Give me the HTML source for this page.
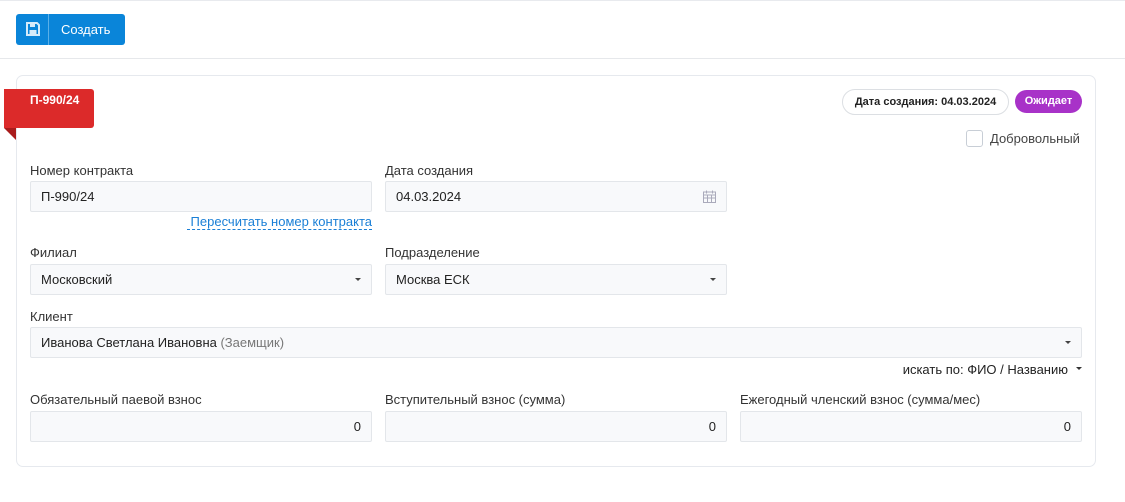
<!DOCTYPE html>
<html><head><meta charset="utf-8"><style>
*{box-sizing:border-box;margin:0;padding:0}
body{width:1125px;height:502px;background:#fff;font-family:"Liberation Sans",sans-serif;font-size:13px;color:#222;position:relative;overflow:hidden}
.a{position:absolute}
.top{left:0;top:0;width:1125px;height:1px;background:#e8eaee}
.sep{left:0;top:58px;width:1125px;height:1px;background:#e6e8eb}
.btn{left:16px;top:14px;width:109px;height:31px;background:#0a85d9;border-radius:3px;color:#fff}
.card{left:16px;top:75px;width:1080px;height:392px;border:1px solid #e6e9ee;border-radius:7px}
.lbl{color:#333;font-size:13px}
.inp{height:31px;background:#f8f9fb;border:1px solid #e3e6ea;border-radius:2px;padding-left:10px;line-height:29px;color:#222}
.r{text-align:right;padding-right:10px}
.car{position:absolute;right:10px;top:13px;width:0;height:0;border-left:3.5px solid transparent;border-right:3.5px solid transparent;border-top:3.5px solid #444}
</style></head><body>
<div class="a top"></div>
<div class="a btn">
 <svg class="a" style="left:10px;top:8px" width="14" height="14" viewBox="0 0 14 14"><path d="M1 1h10l2 2v10H1z" fill="none" stroke="#d6ebfa" stroke-width="2"/><rect x="4" y="1.5" width="5" height="3.5" fill="#d6ebfa"/><rect x="3.5" y="8" width="7" height="4" fill="#d6ebfa"/></svg>
 <div class="a" style="left:32px;top:0;width:1px;height:31px;background:#5ab0e8"></div>
 <div class="a" style="left:45px;top:8px;font-size:13px">Создать</div>
</div>
<div class="a sep"></div>
<div class="a card"></div>
<div class="a" style="left:4px;top:89px;width:90px;height:39px;background:#dc2a2a;border-radius:0 3px 3px 0;color:#fff;font-weight:bold;font-size:12px;padding:4px 0 0 26px">П-990/24</div>
<div class="a" style="left:4px;top:128px;width:0;height:0;border-top:12px solid #a91c1c;border-left:12px solid transparent"></div>
<div class="a" style="left:842px;top:89px;width:167px;height:26px;border:1px solid #dcdfe3;border-radius:13px;font-size:11px;font-weight:bold;line-height:24px;text-align:center;color:#222">Дата создания: 04.03.2024</div>
<div class="a" style="left:1015px;top:90px;width:67px;height:23px;background:#a832c8;border-radius:12px;font-size:11px;font-weight:bold;line-height:23px;text-align:center;color:#fff">Ожидает</div>
<div class="a" style="left:966px;top:130px;width:17px;height:17px;border:1px solid #c8ced6;border-radius:3px"></div>
<div class="a" style="left:990px;top:131px;color:#444">Добровольный</div>

<div class="a lbl" style="left:30px;top:163px">Номер контракта</div>
<div class="a inp" style="left:30px;top:181px;width:342px">П-990/24</div>
<div class="a" style="left:187px;top:214px;width:185px;text-align:right;color:#1a7fd6;border-bottom:1px dashed #1a7fd6;line-height:15px">Пересчитать номер контракта</div>
<div class="a lbl" style="left:385px;top:163px">Дата создания</div>
<div class="a inp" style="left:385px;top:181px;width:342px">04.03.2024
 <svg class="a" style="right:10px;top:8px" width="13" height="13" viewBox="0 0 13 13"><rect x="0.5" y="2" width="12" height="10.5" fill="none" stroke="#aab" /><path d="M0.5 5h12M3.5 0.5v3M9.5 0.5v3M0.5 8h12M4.5 5v7.5M8.5 5v7.5" stroke="#aab"/></svg>
</div>

<div class="a lbl" style="left:30px;top:245px">Филиал</div>
<div class="a inp" style="left:30px;top:264px;width:342px">Московский<span class="car"></span></div>
<div class="a lbl" style="left:385px;top:245px">Подразделение</div>
<div class="a inp" style="left:385px;top:264px;width:342px">Москва ЕСК<span class="car"></span></div>

<div class="a lbl" style="left:30px;top:309px">Клиент</div>
<div class="a inp" style="left:30px;top:327px;width:1052px">Иванова Светлана Ивановна <span style="color:#777">(Заемщик)</span><span class="car"></span></div>
<div class="a" style="left:900px;top:362px;width:168px;text-align:right;color:#222">искать по: ФИО / Названию</div>
<div class="a" style="left:1076px;top:367px;width:0;height:0;border-left:3.5px solid transparent;border-right:3.5px solid transparent;border-top:3.5px solid #333"></div>

<div class="a lbl" style="left:30px;top:392px">Обязательный паевой взнос</div>
<div class="a inp r" style="left:30px;top:411px;width:342px">0</div>
<div class="a lbl" style="left:385px;top:392px">Вступительный взнос (сумма)</div>
<div class="a inp r" style="left:385px;top:411px;width:342px">0</div>
<div class="a lbl" style="left:740px;top:392px">Ежегодный членский взнос (сумма/мес)</div>
<div class="a inp r" style="left:740px;top:411px;width:342px">0</div>
</body></html>
